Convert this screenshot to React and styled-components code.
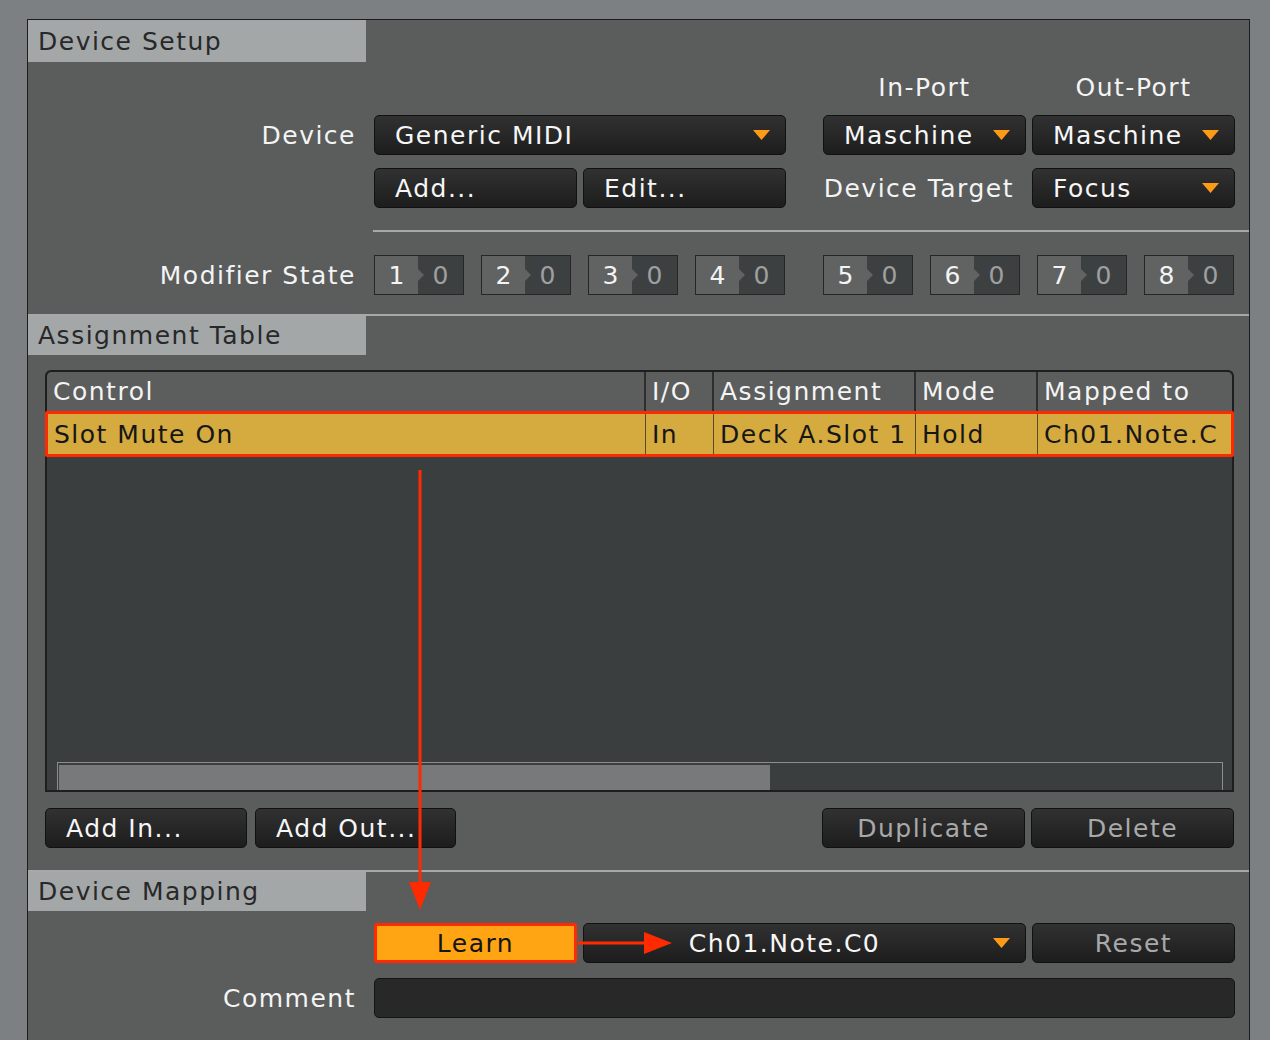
import React from 'react'
import styled, { createGlobalStyle } from 'styled-components'

const GlobalStyle = createGlobalStyle`
  html, body {
    margin: 0;
    padding: 0;
  }
  body {
    background: #7d8082;
    font-family: 'DejaVu Sans', 'Liberation Sans', sans-serif;
    overflow: hidden;
  }
`

const Page = styled.div`
  position: relative;
  width: 1270px;
  height: 1040px;
  padding: 19px 20px 0 27px;
  box-sizing: border-box;
  overflow: hidden;
`

const Panel = styled.div`
  height: 1040px;
  background: #5b5c5c;
  border: 1px solid #1d1d1d;
  border-bottom: none;
  box-sizing: border-box;
  color: #f4f4f4;
  font-size: 25px;
  letter-spacing: 1.5px;
`

const SectionBar = styled.div`
  display: flex;
  margin-top: ${p => p.$top || 0}px;
  border-top: ${p => (p.$line ? '2px solid #a6a9aa' : 'none')};
`

const Tab = styled.div`
  width: 338px;
  height: ${p => p.$h || 39}px;
  background: #a3a7a8;
  color: #282828;
  padding-left: 10px;
  display: flex;
  align-items: center;
  box-sizing: border-box;
`

const FormGrid = styled.div`
  display: grid;
  grid-template-columns: 340px 203px 203px 25px 203px 203px;
  grid-auto-rows: ${p => p.$rows || '40px'};
  column-gap: 6px;
  row-gap: ${p => p.$gap || 13}px;
  align-items: center;
  margin-top: ${p => p.$top || 0}px;
`

const Label = styled.div`
  grid-column: ${p => p.$col || 1};
  text-align: ${p => p.$align || 'right'};
  padding-right: ${p => (p.$align === 'center' ? 0 : 12)}px;
  white-space: nowrap;
`

const Button = styled.div`
  grid-column: ${p => p.$col || 'auto'};
  width: ${p => (p.$w ? `${p.$w}px` : 'auto')};
  height: 40px;
  display: flex;
  align-items: center;
  justify-content: ${p => (p.$center ? 'center' : 'flex-start')};
  padding-left: ${p => (p.$center ? 0 : 20)}px;
  box-sizing: border-box;
  background: linear-gradient(#313131, #1d1d1d);
  border: 1px solid #111;
  border-radius: 5px;
  color: ${p => (p.$dim ? '#a8a9aa' : '#f6f6f6')};
  white-space: nowrap;
  overflow: hidden;
`

const Dropdown = styled(Button)`
  position: relative;
  padding-right: 40px;
`

const Caret = styled.svg`
  position: absolute;
  right: 15px;
  top: 50%;
  margin-top: -5px;
`

const LearnButton = styled.div`
  grid-column: 2;
  height: 40px;
  box-sizing: border-box;
  background: #ffa412;
  border: 3px solid #ff2a00;
  border-radius: 3px;
  color: #141414;
  display: flex;
  align-items: center;
  justify-content: center;
`

const TextField = styled.div`
  grid-column: 2 / 7;
  height: 40px;
  box-sizing: border-box;
  background: #282828;
  border: 1px solid #141414;
  border-radius: 5px;
`

const Divider = styled.div`
  height: 2px;
  margin: 22px 0 0 345px;
  background: #a6a9aa;
`

const ModRow = styled.div`
  display: flex;
  align-items: center;
  margin-top: 23px;
  height: 40px;
`

const ModLabel = styled.div`
  flex-shrink: 0;
  width: 340px;
  margin-right: 6px;
  padding-right: 12px;
  box-sizing: border-box;
  text-align: right;
  white-space: nowrap;
`

const ModGroup = styled.div`
  flex-shrink: 0;
  display: flex;
  gap: 17px;
  & + & {
    margin-left: 38px;
  }
`

const ModBox = styled.div`
  display: flex;
  width: 90px;
  height: 40px;
  border: 1px solid #262626;
  box-sizing: border-box;
`

const ModKey = styled.div`
  position: relative;
  width: 43px;
  background: #616262;
  display: flex;
  align-items: center;
  justify-content: center;
  letter-spacing: 0;
  &::after {
    content: '';
    position: absolute;
    right: -6px;
    top: 50%;
    margin-top: -6px;
    border-left: 6px solid #616262;
    border-top: 6px solid transparent;
    border-bottom: 6px solid transparent;
    z-index: 1;
  }
`

const ModVal = styled.div`
  flex: 1;
  background: #3d4041;
  color: #9d9fa0;
  display: flex;
  align-items: center;
  justify-content: center;
  letter-spacing: 0;
`

const TableWrap = styled.div`
  margin: 15px 15px 0 17px;
`

const Table = styled.div`
  height: 422px;
  display: flex;
  flex-direction: column;
  background: #3a3e3f;
  border: 2px solid #1e1e1e;
  border-radius: 6px 6px 0 0;
  box-sizing: border-box;
`

const HeadRow = styled.div`
  display: grid;
  grid-template-columns: 599px 68px 202px 122px 1fr;
  height: 39px;
  background: #5c5d5d;
  border-radius: 5px 5px 0 0;
`

const SelRow = styled.div`
  display: grid;
  grid-template-columns: 598px 68px 202px 122px 1fr;
  height: 46px;
  margin: 0 -2px;
  background: #d5aa3e;
  border: 3px solid #ff2a00;
  border-radius: 2px;
  box-sizing: border-box;
  color: #161616;
`

const Cell = styled.div`
  display: flex;
  align-items: center;
  padding-left: 6px;
  white-space: nowrap;
  overflow: hidden;
  border-right: ${p => (p.$last ? 'none' : p.$sel ? '1px solid #5a4a22' : '2px solid #2e2e2e')};
`

const TableBody = styled.div`
  flex: 1;
  display: flex;
  flex-direction: column;
  justify-content: flex-end;
`

const Scroll = styled.div`
  height: 28px;
  margin: 0 9px 0 10px;
  border: 1px solid #8b8d8e;
  border-bottom: none;
  padding: 2px 0 0 1px;
  box-sizing: border-box;
`

const Thumb = styled.div`
  height: 100%;
  background: #77797a;
`

const ButtonRow = styled.div`
  display: flex;
  justify-content: space-between;
  margin: 16px 15px 0 17px;
`

const ButtonGroup = styled.div`
  display: flex;
  gap: ${p => p.$gap || 6}px;
`

const Arrows = styled.svg`
  position: absolute;
  left: 0;
  top: 0;
  pointer-events: none;
`

const DownCaret = () => (
  <Caret width="17" height="10" viewBox="0 0 17 10">
    <polygon points="0,0 17,0 8.5,10" fill="#ff9a16" />
  </Caret>
)

const mods = [[1, 2, 3, 4], [5, 6, 7, 8]]

const columns = ['Control', 'I/O', 'Assignment', 'Mode', 'Mapped to']
const selected = ['Slot Mute On', 'In', 'Deck A.Slot 1', 'Hold', 'Ch01.Note.C']

export default function App() {
  return (
    <Page>
      <GlobalStyle />
      <Panel>
        <SectionBar>
          <Tab $h={42}>Device Setup</Tab>
        </SectionBar>

        <FormGrid $top={10} $rows="30px 40px 40px">
          <Label $col={5} $align="center">In-Port</Label>
          <Label $col={6} $align="center">Out-Port</Label>

          <Label>Device</Label>
          <Dropdown $col="2 / 4">Generic MIDI<DownCaret /></Dropdown>
          <Dropdown $col={5}>Maschine<DownCaret /></Dropdown>
          <Dropdown $col={6}>Maschine<DownCaret /></Dropdown>

          <Button $col={2}>Add...</Button>
          <Button $col={3}>Edit...</Button>
          <Label $col={5}>Device Target</Label>
          <Dropdown $col={6}>Focus<DownCaret /></Dropdown>
        </FormGrid>

        <Divider />

        <ModRow>
          <ModLabel>Modifier State</ModLabel>
          {mods.map((group, i) => (
            <ModGroup key={i}>
              {group.map(n => (
                <ModBox key={n}>
                  <ModKey>{n}</ModKey>
                  <ModVal>0</ModVal>
                </ModBox>
              ))}
            </ModGroup>
          ))}
        </ModRow>

        <SectionBar $line $top={19}>
          <Tab>Assignment Table</Tab>
        </SectionBar>

        <TableWrap>
          <Table>
            <HeadRow>
              {columns.map((c, i) => (
                <Cell key={c} $last={i === columns.length - 1}>{c}</Cell>
              ))}
            </HeadRow>
            <SelRow>
              {selected.map((c, i) => (
                <Cell key={c} $sel $last={i === selected.length - 1}>{c}</Cell>
              ))}
            </SelRow>
            <TableBody>
              <Scroll>
                <Thumb style={{ width: 711 }} />
              </Scroll>
            </TableBody>
          </Table>
        </TableWrap>

        <ButtonRow>
          <ButtonGroup $gap={8}>
            <Button $w={202}>Add In...</Button>
            <Button $w={201}>Add Out...</Button>
          </ButtonGroup>
          <ButtonGroup>
            <Button $w={203} $center $dim>Duplicate</Button>
            <Button $w={203} $center $dim>Delete</Button>
          </ButtonGroup>
        </ButtonRow>

        <SectionBar $line $top={22}>
          <Tab>Device Mapping</Tab>
        </SectionBar>

        <FormGrid $top={12} $gap={15}>
          <LearnButton>Learn</LearnButton>
          <Dropdown $col="3 / 6" $center>Ch01.Note.C0<DownCaret /></Dropdown>
          <Button $col={6} $center $dim>Reset</Button>

          <Label>Comment</Label>
          <TextField />
        </FormGrid>
      </Panel>

      <Arrows width="1270" height="1040" viewBox="0 0 1270 1040">
        <line x1="420" y1="470" x2="420" y2="888" stroke="#ff2a00" strokeWidth="3" />
        <polygon points="409,882 431,882 420,910" fill="#ff2a00" />
        <line x1="578" y1="943" x2="650" y2="943" stroke="#ff2a00" strokeWidth="3" />
        <polygon points="644,932 672,943 644,954" fill="#ff2a00" />
      </Arrows>
    </Page>
  )
}
